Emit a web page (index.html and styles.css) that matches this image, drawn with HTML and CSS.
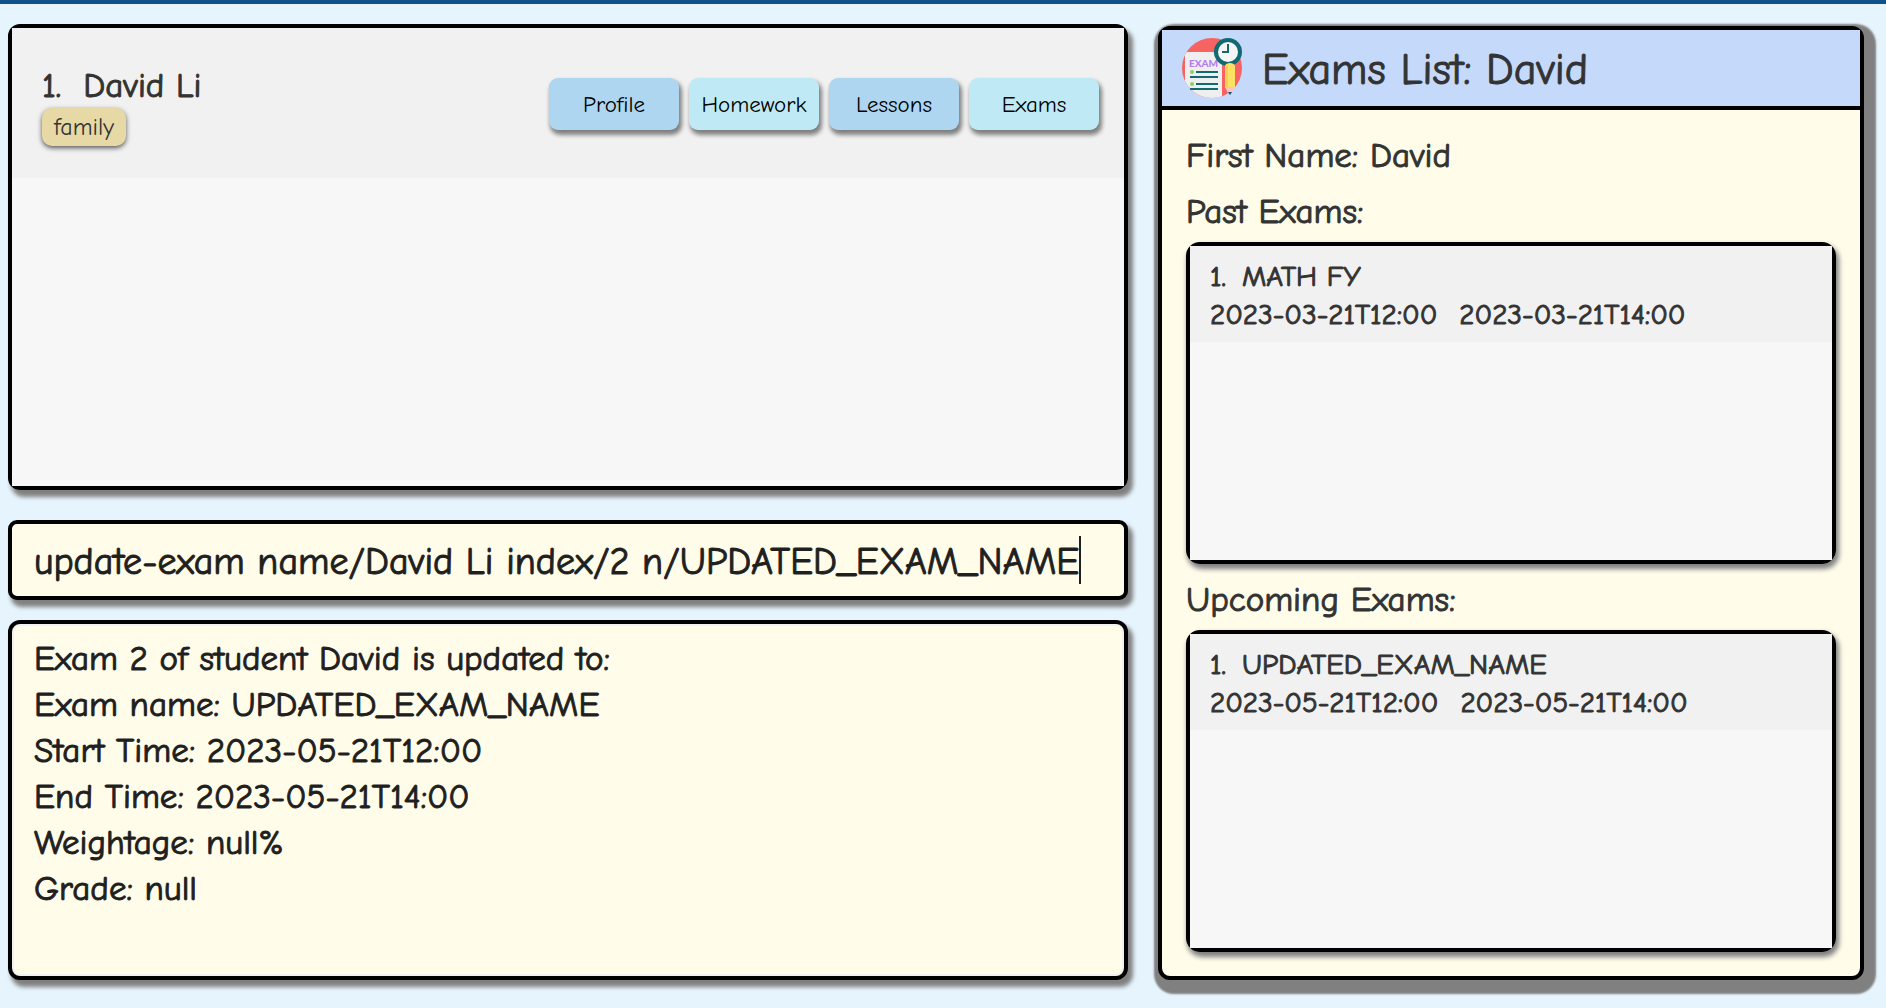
FILE: index.html
```html
<!DOCTYPE html>
<html lang="en">
<head>
<meta charset="utf-8">
<title>Exams List</title>
<link rel="stylesheet" href="styles.css">
</head>
<body>
<div class="topbar"></div>
<div class="layout">
  <main class="main-column">
    <section class="student-list" aria-label="Students">
      <div class="student">
        <div class="student-info">
          <h2 class="student-name"><span>1.</span><span>David Li</span></h2>
          <span class="tag">family</span>
        </div>
        <div class="actions">
          <button type="button" class="action action-blue">Profile</button>
          <button type="button" class="action action-aqua">Homework</button>
          <button type="button" class="action action-blue">Lessons</button>
          <button type="button" class="action action-aqua">Exams</button>
        </div>
      </div>
      <div class="list-rest"></div>
    </section>
    <form class="command">
      <input class="command-input" type="text" aria-label="Command" size="58" value="update-exam name/David Li index/2 n/UPDATED_EXAM_NAME">
      <span class="caret"></span>
    </form>
    <output class="result">Exam 2 of student David is updated to:
Exam name: UPDATED_EXAM_NAME
Start Time: 2023-05-21T12:00
End Time: 2023-05-21T14:00
Weightage: null%
Grade: null</output>
  </main>
  <aside class="exams">
    <header class="exams-header">
      <svg class="exams-icon" viewBox="0 0 60 60" aria-hidden="true">
        <clipPath id="disc"><circle cx="30" cy="30" r="30"/></clipPath>
        <circle cx="30" cy="30" r="30" fill="#f76363"/>
        <path d="M3 14h37v46H3z" fill="#efefef" clip-path="url(#disc)"/>
        <path d="M30 14l10 13v-13z" fill="#d8dce0"/>
        <text class="icon-label" x="7" y="29">EXAM</text>
        <g fill="#8bd35b"><circle cx="10" cy="34" r="2"/><circle cx="10" cy="46" r="2"/></g>
        <g fill="#12696f"><path d="M14 33h22v2H14zM8 38h28v2H8zM14 45h22v2H14zM8 50h28v2H8z"/></g>
        <path d="M34 20l10 7h4l-3-7z" fill="#12696f"/>
        <circle cx="46" cy="14" r="14" fill="#12696f"/>
        <circle cx="46" cy="14" r="10" fill="#f5f5f5"/>
        <path d="M46 6v8h-6" fill="none" stroke="#12696f" stroke-width="2"/>
        <path d="M43 28a5 3 0 0 1 10 0v22H43z" fill="#fbe066"/>
        <path d="M43 27h3v23h-3z" fill="#f5cf52"/>
        <path d="M43 49h10l-3 6h-4z" fill="#fbc5bd"/>
        <path d="M46 54h4l-2 3z" fill="#12506f"/>
      </svg>
      <h1 class="exams-title">Exams List: David</h1>
    </header>
    <div class="exams-body">
      <p class="label">First Name: David</p>
      <h2 class="label label-past">Past Exams:</h2>
      <div class="exam-list">
        <div class="exam">
          <p class="exam-line exam-name"><span>1.</span><span>MATH FY</span></p>
          <p class="exam-line exam-times"><time>2023-03-21T12:00</time><time>2023-03-21T14:00</time></p>
        </div>
        <div class="list-rest"></div>
      </div>
      <h2 class="label label-upcoming">Upcoming Exams:</h2>
      <div class="exam-list">
        <div class="exam">
          <p class="exam-line exam-name"><span>1.</span><span>UPDATED_EXAM_NAME</span></p>
          <p class="exam-line exam-times"><time>2023-05-21T12:00</time><time>2023-05-21T14:00</time></p>
        </div>
        <div class="list-rest"></div>
      </div>
    </div>
  </aside>
</div>
</body>
</html>
```
FILE: styles.css
```css
* { box-sizing: border-box; }

body {
  margin: 0;
  min-height: 100vh;
  display: flex;
  flex-direction: column;
  background: #e6f4fd;
  color: #333;
  font-family: "Comic Sans MS", "Comic Neue", Lato, sans-serif;
  -webkit-text-stroke: 1px;
}

h1, h2, p { margin: 0; font-weight: 400; }

.topbar { height: 4px; background: #0f518b; }

.layout {
  flex: 1;
  display: grid;
  grid-template-columns: minmax(0, 1120fr) minmax(0, 706fr);
  gap: 30px;
  padding: 20px 22px 28px 8px;
}

.main-column {
  display: grid;
  grid-template-rows: minmax(0, 476fr) 80px minmax(0, 360fr);
  row-gap: 20px;
}

.student-list {
  display: flex;
  flex-direction: column;
  margin-bottom: 10px;
  border: 4px solid #000;
  border-radius: 12px;
  box-shadow: 4px 6px 4px 1px #808080;
}

.student {
  display: flex;
  align-items: flex-start;
  justify-content: space-between;
  height: 150px;
  padding: 36px 25px 0 30px;
  background: #f1f1f1;
}

.list-rest { flex: 1; background: #f7f7f7; }

.student-name {
  display: flex;
  gap: 22px;
  font-size: 35px;
  line-height: 44px;
}

.tag {
  display: inline-block;
  padding: 0 12px;
  border-radius: 10px;
  background: #e6d9a5;
  box-shadow: 0 2px 5px #555;
  font-size: 24px;
  line-height: 38px;
  -webkit-text-stroke: 0;
}

.actions { display: flex; gap: 10px; padding-top: 14px; }

.action {
  width: 130px;
  height: 52px;
  padding: 0;
  border: 0;
  border-radius: 9px;
  box-shadow: 2px 4px 4px 1px #808080;
  color: #000;
  font-family: inherit;
  font-size: 23px;
  -webkit-text-stroke: 0;
}

.action-blue { background: #aed6f0; }
.action-aqua { background: #bfeaf5; }

.command {
  display: flex;
  align-items: center;
  padding: 0 22px;
  border: 4px solid #000;
  border-radius: 9px;
  background: #fffcea;
  box-shadow: 4px 6px 4px 1px #808080;
}

.command-input {
  field-sizing: content;
  min-width: 0;
  padding: 4px 0 0;
  border: 0;
  outline: 0;
  background: none;
  color: #1f1f1f;
  font-family: inherit;
  font-size: 38px;
  line-height: 48px;
}

.caret { width: 2px; height: 48px; background: #1f1f1f; }

.result {
  display: block;
  padding: 12px 22px;
  border: 4px solid #000;
  border-radius: 12px;
  background: #fffcea;
  box-shadow: 4px 6px 4px 1px #808080, inset 0 0 0 2px #f1f1f1;
  color: #1f1f1f;
  font-size: 35px;
  line-height: 46px;
  white-space: pre-line;
}

.exams {
  display: flex;
  flex-direction: column;
  margin-top: 2px;
  border: 4px solid #000;
  border-radius: 12px;
  background: #fffcea;
  box-shadow: 4px 6px 2px 8px #808080;
}

.exams-header {
  display: flex;
  align-items: center;
  gap: 20px;
  height: 80px;
  padding: 0 20px;
  border-bottom: 4px solid #000;
  background: #c5d9fb;
}

.exams-icon { width: 60px; height: 60px; flex: none; }

.icon-label {
  fill: #b57bf0;
  font-family: Lato, sans-serif;
  font-size: 10px;
  font-weight: 900;
  -webkit-text-stroke: 0;
}

.exams-title { margin-top: 4px; font-size: 44px; line-height: 56px; }

.exams-body {
  flex: 1;
  display: flex;
  flex-direction: column;
  padding: 18px 24px 24px;
}

.label { font-size: 35px; line-height: 56px; }
.label-past { margin-bottom: 2px; }
.label-upcoming { margin: 8px 0 2px; }

.exam-list {
  flex: 1;
  display: flex;
  flex-direction: column;
  border: 4px solid #000;
  border-radius: 14px;
  box-shadow: 2px 4px 5px 1px #808080;
}

.exam { height: 96px; padding: 12px 20px; background: #f1f1f1; }
.exam-line { display: flex; font-size: 29px; line-height: 38px; }
.exam-name { gap: 16px; }
.exam-times { gap: 22px; }
```
